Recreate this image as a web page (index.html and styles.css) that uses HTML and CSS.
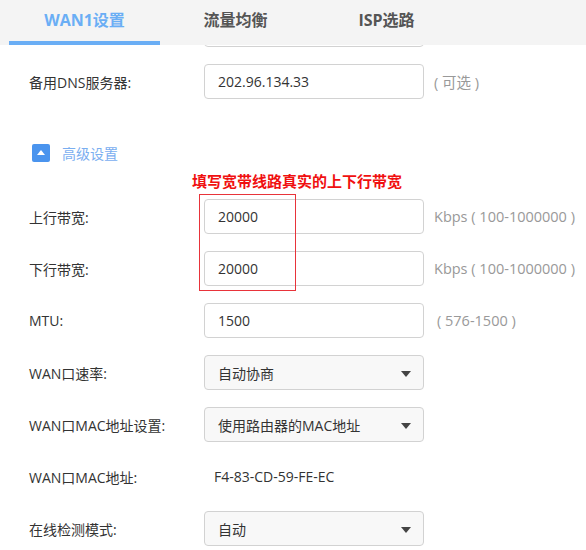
FILE: index.html
```html
<!DOCTYPE html>
<html lang="zh-CN">
<head>
<meta charset="utf-8">
<link rel="stylesheet" href="styles.css">
</head>
<body>
<div class="tabs">
  <div class="tab active">WAN1设置</div>
  <div class="tab">流量均衡</div>
  <div class="tab">ISP选路</div>
</div>
<div class="form">
  <div class="clip-row"><div class="field clipped"></div></div>
  <div class="row first">
    <div class="label">备用DNS服务器:</div>
    <div class="field">202.96.134.33</div>
    <div class="hint">( 可选 )</div>
  </div>
  <div class="adv">
    <span class="adv-icon"><svg width="8" height="5" viewBox="0 0 8 5"><path d="M4 0 L8 5 L0 5 Z" fill="#fff"/></svg></span>
    <span class="adv-text">高级设置</span>
  </div>
  <div class="note">填写宽带线路真实的上下行带宽</div>
  <div class="bw">
    <div class="row tight">
      <div class="label">上行带宽:</div>
      <div class="field">20000</div>
      <div class="hint">Kbps ( 100-1000000 )</div>
    </div>
    <div class="row">
      <div class="label">下行带宽:</div>
      <div class="field">20000</div>
      <div class="hint">Kbps ( 100-1000000 )</div>
    </div>
    <div class="mark"></div>
  </div>
  <div class="row">
    <div class="label">MTU:</div>
    <div class="field">1500</div>
    <div class="hint hint-mtu">( 576-1500 )</div>
  </div>
  <div class="row">
    <div class="label">WAN口速率:</div>
    <div class="field select">自动协商<span class="caret"></span></div>
  </div>
  <div class="row">
    <div class="label">WAN口MAC地址设置:</div>
    <div class="field select">使用路由器的MAC地址<span class="caret"></span></div>
  </div>
  <div class="row">
    <div class="label">WAN口MAC地址:</div>
    <div class="value">F4-83-CD-59-FE-EC</div>
  </div>
  <div class="row">
    <div class="label">在线检测模式:</div>
    <div class="field select">自动<span class="caret"></span></div>
  </div>
</div>
</body>
</html>
```

FILE: styles.css
```css
* { box-sizing: border-box; }
html, body { margin: 0; padding: 0; background: #fff; }
body {
  font-family: "Open Sans", "Noto Sans CJK SC", sans-serif;
  font-size: 14px;
  color: #333;
  overflow: hidden;
}
.tabs {
  display: flex;
  height: 45px;
  background: #f4f4f4;
  padding-left: 9px;
}
.tab {
  width: 151px;
  height: 45px;
  line-height: 40px;
  text-align: center;
  font-size: 16px;
  font-weight: bold;
  color: #555;
  border-bottom: 4px solid transparent;
}
.tab.active {
  color: #6aaef5;
  border-bottom-color: #6aaef5;
}
.form {
  padding-left: 29px;
}
.clip-row {
  height: 2px;
  overflow: hidden;
  display: flex;
  align-items: flex-end;
  padding-left: 175px;
}
.clip-row .clipped {
  flex: none;
}
.row {
  display: flex;
  align-items: center;
  height: 35px;
  margin-top: 17px;
}
.row.first { margin-top: 17px; }
.row.tight { margin-top: 0; }
.label {
  width: 175px;
  flex: none;
  color: #333;
  white-space: nowrap;
}
.field {
  width: 220px;
  height: 35px;
  flex: none;
  border: 1px solid #d2d2d2;
  border-radius: 4px;
  background: #fff;
  padding-left: 13px;
  display: flex;
  align-items: center;
  color: #333;
  position: relative;
}
.field.select {
  background: #f8f8f8;
}
.caret {
  position: absolute;
  right: 12px;
  top: 15px;
  width: 0;
  height: 0;
  border-left: 5px solid transparent;
  border-right: 5px solid transparent;
  border-top: 6px solid #444;
}
.hint {
  margin-left: 10px;
  color: #999;
  white-space: nowrap;
  font-size: 14.5px;
}
.hint-mtu { margin-left: 13px; }
.value {
  padding-left: 10px;
  color: #333;
}
.adv {
  display: flex;
  align-items: center;
  margin-top: 45px;
  margin-left: 3px;
  height: 18px;
}
.adv-icon {
  width: 18px;
  height: 18px;
  background: #4a94ee;
  border-radius: 2px;
  display: flex;
  align-items: center;
  justify-content: center;
}
.adv-icon svg { display: block; margin-top: -1px; }
.adv-text {
  margin-left: 12px;
  color: #7aaef0;
  font-size: 14px;
}
.note {
  margin-top: 10px;
  margin-left: 163px;
  height: 18px;
  line-height: 18px;
  color: #f01010;
  font-weight: bold;
  font-size: 15px;
}
.bw {
  position: relative;
  margin-top: 9px;
}
.mark {
  position: absolute;
  left: 170px;
  top: -5px;
  width: 97px;
  height: 97px;
  border: 1px solid #e8333a;
}
```
